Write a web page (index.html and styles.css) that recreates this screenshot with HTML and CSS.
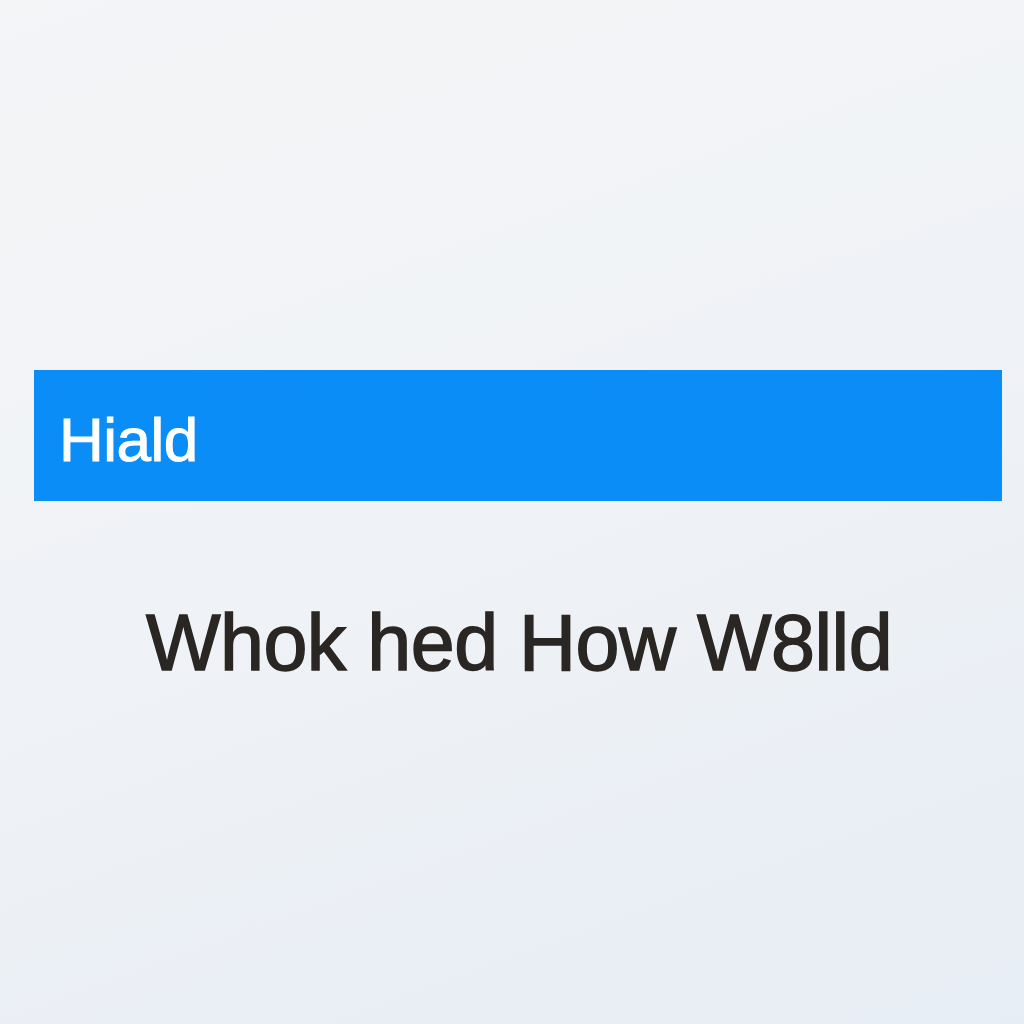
FILE: index.html
```html
<!DOCTYPE html>
<html>
<head>
<meta charset="utf-8">
<link rel="stylesheet" href="styles.css">
</head>
<body>
<main class="page">
  <div class="bar"><span class="bar-title">Hiald</span></div>
  <h1 class="headline">Whok hed How W8lld</h1>
</main>
</body>
</html>
```
FILE: styles.css
```css
html, body {
  margin: 0;
  padding: 0;
}
body {
  width: 1024px;
  height: 1024px;
  overflow: hidden;
  background: linear-gradient(160deg, #f4f5f7 0%, #eff2f6 50%, #e7edf4 100%);
  font-family: "Liberation Sans", Arial, sans-serif;
}
.page {
  display: flex;
  flex-direction: column;
  padding-top: 370px;
  padding-left: 34px;
  padding-right: 22px;
}
.bar {
  height: 131px;
  background: #0a8df6;
  display: flex;
  align-items: center;
  padding-left: 25px;
  padding-top: 8px;
  box-sizing: border-box;
}
.bar-title {
  color: #ffffff;
  font-size: 62px;
  letter-spacing: -0.5px;
  line-height: 1;
  -webkit-text-stroke: 1px #ffffff;
}
.headline {
  margin: 0;
  margin-top: 102px;
  text-align: center;
  font-weight: normal;
  color: #2a2623;
  font-size: 79px;
  letter-spacing: -0.5px;
  line-height: 1;
  padding-left: 2px;
  -webkit-text-stroke: 1.5px #2a2623;
}
```
